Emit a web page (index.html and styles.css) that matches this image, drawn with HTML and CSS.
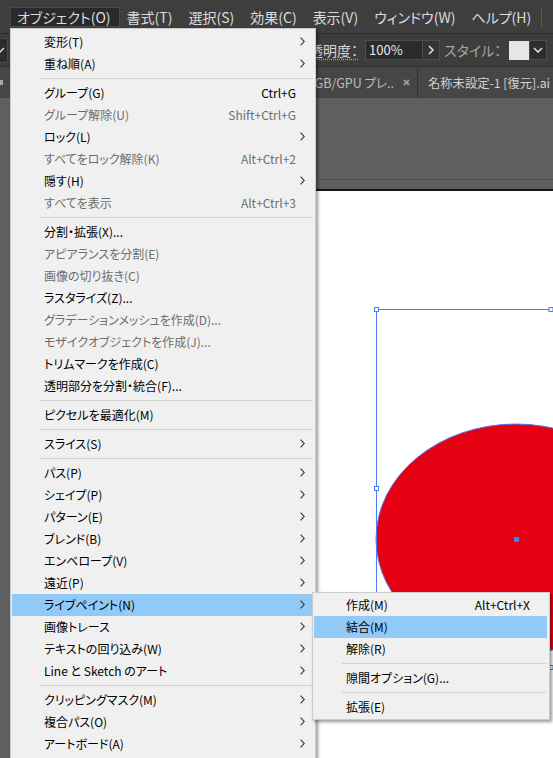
FILE: index.html
```html
<!DOCTYPE html>
<html lang="ja">
<head>
<meta charset="utf-8">
<title>オブジェクト メニュー</title>
<link rel="stylesheet" href="styles.css">
</head>
<body>
<div class="app">
  <nav class="menubar">
    <span class="mb-item active">オブジェクト(O)</span>
    <span class="mb-item">書式(T)</span>
    <span class="mb-item">選択(S)</span>
    <span class="mb-item">効果(C)</span>
    <span class="mb-item">表示(V)</span>
    <span class="mb-item">ウィンドウ(W)</span>
    <span class="mb-item">ヘルプ(H)</span>
    <span class="mb-sep"></span>
  </nav>

  <div class="controlbar">
    <div class="cb-left">
      <svg width="8" height="24" viewBox="0 0 8 24"><polyline points="-4,9 0,13 4,9" fill="none" stroke="#e6e6e6" stroke-width="1.4"/></svg>
    </div>
    <div class="cb-right">
      <span class="cb-label cb-opacity">透明度：</span>
      <span class="cb-input">100%</span>
      <span class="cb-btn"><svg width="6" height="10" viewBox="0 0 6 10"><polyline points="1,1 5,5 1,9" fill="none" stroke="#e6e6e6" stroke-width="1.5"/></svg></span>
      <span class="cb-label cb-style">スタイル：</span>
      <span class="cb-swatch"></span>
      <span class="cb-drop"><svg width="10" height="6" viewBox="0 0 10 6"><polyline points="1,1 5,5 9,1" fill="none" stroke="#e6e6e6" stroke-width="1.5"/></svg></span>
    </div>
  </div>

  <div class="tabbar">
    <span class="tab-stub"></span>
    <div class="tab">
      <span class="tab-title">RGB/GPU プレ..</span>
      <svg class="tab-close" width="7" height="7" viewBox="0 0 7 7"><path d="M1 1 L6 6 M6 1 L1 6" stroke="#9a9a9a" stroke-width="1.8"/></svg>
    </div>
    <div class="tab tab-current">
      <span class="tab-title">名称未設定-1 [復元].ai</span>
    </div>
  </div>

  <div class="canvas">
    <svg class="art" width="553" height="660" viewBox="0 0 553 660">
      <rect x="240.5" y="81.5" width="700" height="700" fill="none" stroke="#d8141b"/>
      <rect x="252" y="91" width="700" height="700" fill="#141414"/>
      <rect x="252" y="93" width="700" height="700" fill="#ffffff"/>
      <ellipse cx="516" cy="441" rx="140" ry="115" fill="#e50012" stroke="#4b7bf5" stroke-width="1"/>
      <rect x="376.5" y="211.5" width="349" height="358" fill="none" stroke="#4b7bf5"/>
      <g fill="#ffffff" stroke="#4b7bf5">
        <rect x="374.5" y="209.5" width="4" height="4"/>
        <rect x="549" y="209.5" width="4" height="4"/>
        <rect x="374.5" y="388.5" width="4" height="4"/>
        <rect x="374.5" y="567.5" width="4" height="4"/>
        <rect x="549" y="567.5" width="4" height="4"/>
      </g>
      <rect x="514" y="439" width="5" height="5" fill="#4b7bf5"/>
    </svg>
  </div>

  <div class="menu main-menu">
    <div class="mi"><span class="mi-label">変形(T)</span><span class="mi-key"></span><span class="mi-arrow"><svg width="5" height="9" viewBox="0 0 5 9"><polyline points="0.6,0.6 4.3,4.5 0.6,8.4" fill="none" stroke="#3a3a3a" stroke-width="1.1"/></svg></span></div>
    <div class="mi"><span class="mi-label">重ね順(A)</span><span class="mi-key"></span><span class="mi-arrow"><svg width="5" height="9" viewBox="0 0 5 9"><polyline points="0.6,0.6 4.3,4.5 0.6,8.4" fill="none" stroke="#3a3a3a" stroke-width="1.1"/></svg></span></div>
    <div class="msep"></div>
    <div class="mi"><span class="mi-label">グループ(G)</span><span class="mi-key">Ctrl+G</span><span class="mi-arrow"></span></div>
    <div class="mi disabled"><span class="mi-label">グループ解除(U)</span><span class="mi-key">Shift+Ctrl+G</span><span class="mi-arrow"></span></div>
    <div class="mi"><span class="mi-label">ロック(L)</span><span class="mi-key"></span><span class="mi-arrow"><svg width="5" height="9" viewBox="0 0 5 9"><polyline points="0.6,0.6 4.3,4.5 0.6,8.4" fill="none" stroke="#3a3a3a" stroke-width="1.1"/></svg></span></div>
    <div class="mi disabled"><span class="mi-label">すべてをロック解除(K)</span><span class="mi-key">Alt+Ctrl+2</span><span class="mi-arrow"></span></div>
    <div class="mi"><span class="mi-label">隠す(H)</span><span class="mi-key"></span><span class="mi-arrow"><svg width="5" height="9" viewBox="0 0 5 9"><polyline points="0.6,0.6 4.3,4.5 0.6,8.4" fill="none" stroke="#3a3a3a" stroke-width="1.1"/></svg></span></div>
    <div class="mi disabled"><span class="mi-label">すべてを表示</span><span class="mi-key">Alt+Ctrl+3</span><span class="mi-arrow"></span></div>
    <div class="msep"></div>
    <div class="mi"><span class="mi-label">分割・拡張(X)...</span><span class="mi-key"></span><span class="mi-arrow"></span></div>
    <div class="mi disabled"><span class="mi-label">アピアランスを分割(E)</span><span class="mi-key"></span><span class="mi-arrow"></span></div>
    <div class="mi disabled"><span class="mi-label">画像の切り抜き(C)</span><span class="mi-key"></span><span class="mi-arrow"></span></div>
    <div class="mi"><span class="mi-label">ラスタライズ(Z)...</span><span class="mi-key"></span><span class="mi-arrow"></span></div>
    <div class="mi disabled"><span class="mi-label">グラデーションメッシュを作成(D)...</span><span class="mi-key"></span><span class="mi-arrow"></span></div>
    <div class="mi disabled"><span class="mi-label">モザイクオブジェクトを作成(J)...</span><span class="mi-key"></span><span class="mi-arrow"></span></div>
    <div class="mi"><span class="mi-label">トリムマークを作成(C)</span><span class="mi-key"></span><span class="mi-arrow"></span></div>
    <div class="mi"><span class="mi-label">透明部分を分割・統合(F)...</span><span class="mi-key"></span><span class="mi-arrow"></span></div>
    <div class="msep"></div>
    <div class="mi"><span class="mi-label">ピクセルを最適化(M)</span><span class="mi-key"></span><span class="mi-arrow"></span></div>
    <div class="msep"></div>
    <div class="mi"><span class="mi-label">スライス(S)</span><span class="mi-key"></span><span class="mi-arrow"><svg width="5" height="9" viewBox="0 0 5 9"><polyline points="0.6,0.6 4.3,4.5 0.6,8.4" fill="none" stroke="#3a3a3a" stroke-width="1.1"/></svg></span></div>
    <div class="msep"></div>
    <div class="mi"><span class="mi-label">パス(P)</span><span class="mi-key"></span><span class="mi-arrow"><svg width="5" height="9" viewBox="0 0 5 9"><polyline points="0.6,0.6 4.3,4.5 0.6,8.4" fill="none" stroke="#3a3a3a" stroke-width="1.1"/></svg></span></div>
    <div class="mi"><span class="mi-label">シェイプ(P)</span><span class="mi-key"></span><span class="mi-arrow"><svg width="5" height="9" viewBox="0 0 5 9"><polyline points="0.6,0.6 4.3,4.5 0.6,8.4" fill="none" stroke="#3a3a3a" stroke-width="1.1"/></svg></span></div>
    <div class="mi"><span class="mi-label">パターン(E)</span><span class="mi-key"></span><span class="mi-arrow"><svg width="5" height="9" viewBox="0 0 5 9"><polyline points="0.6,0.6 4.3,4.5 0.6,8.4" fill="none" stroke="#3a3a3a" stroke-width="1.1"/></svg></span></div>
    <div class="mi"><span class="mi-label">ブレンド(B)</span><span class="mi-key"></span><span class="mi-arrow"><svg width="5" height="9" viewBox="0 0 5 9"><polyline points="0.6,0.6 4.3,4.5 0.6,8.4" fill="none" stroke="#3a3a3a" stroke-width="1.1"/></svg></span></div>
    <div class="mi"><span class="mi-label">エンベロープ(V)</span><span class="mi-key"></span><span class="mi-arrow"><svg width="5" height="9" viewBox="0 0 5 9"><polyline points="0.6,0.6 4.3,4.5 0.6,8.4" fill="none" stroke="#3a3a3a" stroke-width="1.1"/></svg></span></div>
    <div class="mi"><span class="mi-label">遠近(P)</span><span class="mi-key"></span><span class="mi-arrow"><svg width="5" height="9" viewBox="0 0 5 9"><polyline points="0.6,0.6 4.3,4.5 0.6,8.4" fill="none" stroke="#3a3a3a" stroke-width="1.1"/></svg></span></div>
    <div class="mi hover"><span class="mi-label">ライブペイント(N)</span><span class="mi-key"></span><span class="mi-arrow"><svg width="5" height="9" viewBox="0 0 5 9"><polyline points="0.6,0.6 4.3,4.5 0.6,8.4" fill="none" stroke="#3a3a3a" stroke-width="1.1"/></svg></span></div>
    <div class="mi"><span class="mi-label">画像トレース</span><span class="mi-key"></span><span class="mi-arrow"><svg width="5" height="9" viewBox="0 0 5 9"><polyline points="0.6,0.6 4.3,4.5 0.6,8.4" fill="none" stroke="#3a3a3a" stroke-width="1.1"/></svg></span></div>
    <div class="mi"><span class="mi-label">テキストの回り込み(W)</span><span class="mi-key"></span><span class="mi-arrow"><svg width="5" height="9" viewBox="0 0 5 9"><polyline points="0.6,0.6 4.3,4.5 0.6,8.4" fill="none" stroke="#3a3a3a" stroke-width="1.1"/></svg></span></div>
    <div class="mi"><span class="mi-label">Line と Sketch のアート</span><span class="mi-key"></span><span class="mi-arrow"><svg width="5" height="9" viewBox="0 0 5 9"><polyline points="0.6,0.6 4.3,4.5 0.6,8.4" fill="none" stroke="#3a3a3a" stroke-width="1.1"/></svg></span></div>
    <div class="msep"></div>
    <div class="mi"><span class="mi-label">クリッピングマスク(M)</span><span class="mi-key"></span><span class="mi-arrow"><svg width="5" height="9" viewBox="0 0 5 9"><polyline points="0.6,0.6 4.3,4.5 0.6,8.4" fill="none" stroke="#3a3a3a" stroke-width="1.1"/></svg></span></div>
    <div class="mi"><span class="mi-label">複合パス(O)</span><span class="mi-key"></span><span class="mi-arrow"><svg width="5" height="9" viewBox="0 0 5 9"><polyline points="0.6,0.6 4.3,4.5 0.6,8.4" fill="none" stroke="#3a3a3a" stroke-width="1.1"/></svg></span></div>
    <div class="mi"><span class="mi-label">アートボード(A)</span><span class="mi-key"></span><span class="mi-arrow"><svg width="5" height="9" viewBox="0 0 5 9"><polyline points="0.6,0.6 4.3,4.5 0.6,8.4" fill="none" stroke="#3a3a3a" stroke-width="1.1"/></svg></span></div>
  </div>

  <div class="menu submenu">
    <div class="mi"><span class="mi-label">作成(M)</span><span class="mi-key">Alt+Ctrl+X</span><span class="mi-arrow"></span></div>
    <div class="mi hover"><span class="mi-label">結合(M)</span><span class="mi-key"></span><span class="mi-arrow"></span></div>
    <div class="mi"><span class="mi-label">解除(R)</span><span class="mi-key"></span><span class="mi-arrow"></span></div>
    <div class="msep"></div>
    <div class="mi"><span class="mi-label">隙間オプション(G)...</span><span class="mi-key"></span><span class="mi-arrow"></span></div>
    <div class="msep"></div>
    <div class="mi"><span class="mi-label">拡張(E)</span><span class="mi-key"></span><span class="mi-arrow"></span></div>
  </div>
</div>
</body>
</html>
```

FILE: styles.css
```css
* {
  box-sizing: border-box;
  margin: 0;
  padding: 0;
}

html,
body {
  width: 553px;
  height: 758px;
  overflow: hidden;
}

body {
  font-family: "Noto Sans CJK JP", "Noto Sans", sans-serif;
  font-feature-settings: "palt";
  background: #5e5e5e;
}

.app {
  position: relative;
  width: 553px;
  height: 758px;
  display: flex;
  flex-direction: column;
  overflow: hidden;
}

/* ---------- menu bar ---------- */
.menubar {
  flex: 0 0 34px;
  display: flex;
  align-items: flex-start;
  padding: 7px 0 0 10px;
  background: #3e3e3e;
  border-bottom: 1px solid #2b2b2b;
}

.mb-item {
  height: 20px;
  line-height: 18px;
  padding: 0 8px 0 6px;
  border: 1px solid transparent;
  color: #dcdcdc;
  font-size: 14px;
  white-space: nowrap;
}

.mb-item.active {
  background: #2a2a2a;
  border-color: #4a4a4a;
}

.mb-sep {
  width: 1px;
  height: 20px;
  margin-left: auto;
  margin-right: 11px;
  background: #575757;
}

/* ---------- control bar ---------- */
.controlbar {
  flex: 0 0 33px;
  display: flex;
  align-items: center;
  background: #3d3d3d;
  border-bottom: 1px solid #2e2e2e;
}

.cb-left {
  width: 8px;
  height: 25px;
  background: #2c2c2c;
  border: 1px solid #4c4c4c;
  border-left: none;
}

.cb-left svg {
  display: block;
}

.cb-right {
  margin-left: auto;
  display: flex;
  align-items: center;
  padding-right: 6px;
}

.cb-label {
  font-size: 14px;
  white-space: nowrap;
}

.cb-opacity {
  margin-right: 7px;
  color: #d6d6d6;
  text-decoration: underline dotted #a0a0a0;
  text-underline-offset: 3px;
}

.cb-input {
  width: 58px;
  height: 20px;
  padding-left: 3px;
  line-height: 18px;
  background: #2b2b2b;
  border: 1px solid #4c4c4c;
  color: #e8e8e8;
  font-size: 13px;
}

.cb-btn {
  width: 17px;
  height: 20px;
  display: flex;
  align-items: center;
  justify-content: center;
  background: #343434;
  border: 1px solid #4c4c4c;
  border-left: none;
}

.cb-style {
  width: 69px;
  padding-left: 4px;
  color: #a6a6a6;
}

.cb-swatch {
  width: 20px;
  height: 19px;
  background: #e6e6e6;
}

.cb-drop {
  width: 18px;
  height: 20px;
  display: flex;
  align-items: center;
  justify-content: center;
  background: #2e2e2e;
  border: 1px solid #4c4c4c;
}

/* ---------- tab bar ---------- */
.tabbar {
  flex: 0 0 31px;
  display: flex;
  background: #464646;
  overflow: hidden;
}

.tab-stub {
  flex: 0 0 3px;
  align-self: center;
  height: 5px;
  background: #a8a8a8;
}

.tab {
  flex: 0 0 415px;
  display: flex;
  align-items: center;
  justify-content: flex-end;
  padding-right: 7px;
  border-right: 1px solid #333333;
  overflow: hidden;
}

.tab-title {
  flex-shrink: 0;
  color: #bdbdbd;
  font-size: 12.5px;
  white-space: nowrap;
}

.tab-close {
  margin-left: 9px;
}

.tab-current {
  flex: 1 0 auto;
  justify-content: flex-start;
  padding: 0 0 0 10px;
  border-right: none;
}

.tab-current .tab-title {
  color: #d2d2d2;
  font-size: 12.3px;
}

/* ---------- canvas ---------- */
.canvas {
  position: relative;
  flex: 1 1 auto;
  background: #5f5f5f;
  overflow: hidden;
}

.art {
  position: absolute;
  left: 0;
  top: 0;
  display: block;
}

/* ---------- dropdown menus ---------- */
.menu {
  position: absolute;
  background: #f0f0f0;
  border: 1px solid #cccccc;
  box-shadow: 2px 2px 3px rgba(0, 0, 0, 0.4);
  color: #000000;
  font-size: 12px;
}

.main-menu {
  left: 10px;
  top: 28px;
  width: 306px;
  padding: 2px 2px 12px 1px;
}

.submenu {
  left: 312px;
  top: 592px;
  width: 238px;
  padding: 1px 2px 1px 1px;
}

.mi {
  height: 22px;
  display: flex;
  align-items: center;
  padding-left: 32px;
  padding-bottom: 2px;
}

.mi-label {
  flex: 1 1 auto;
  white-space: nowrap;
}

.mi-key {
  white-space: nowrap;
}

.mi-arrow {
  flex: 0 0 17px;
  height: 20px;
  display: flex;
  align-items: center;
  padding-left: 4px;
}

.mi-arrow svg {
  display: block;
}

.mi.disabled {
  color: #6d6d6d;
}

.mi.hover {
  background: #91c9f7;
}

.msep {
  height: 7px;
  margin-left: 28px;
  padding-top: 3px;
}

.msep::after {
  content: "";
  display: block;
  height: 1px;
  background: #d2d2d2;
}
```
